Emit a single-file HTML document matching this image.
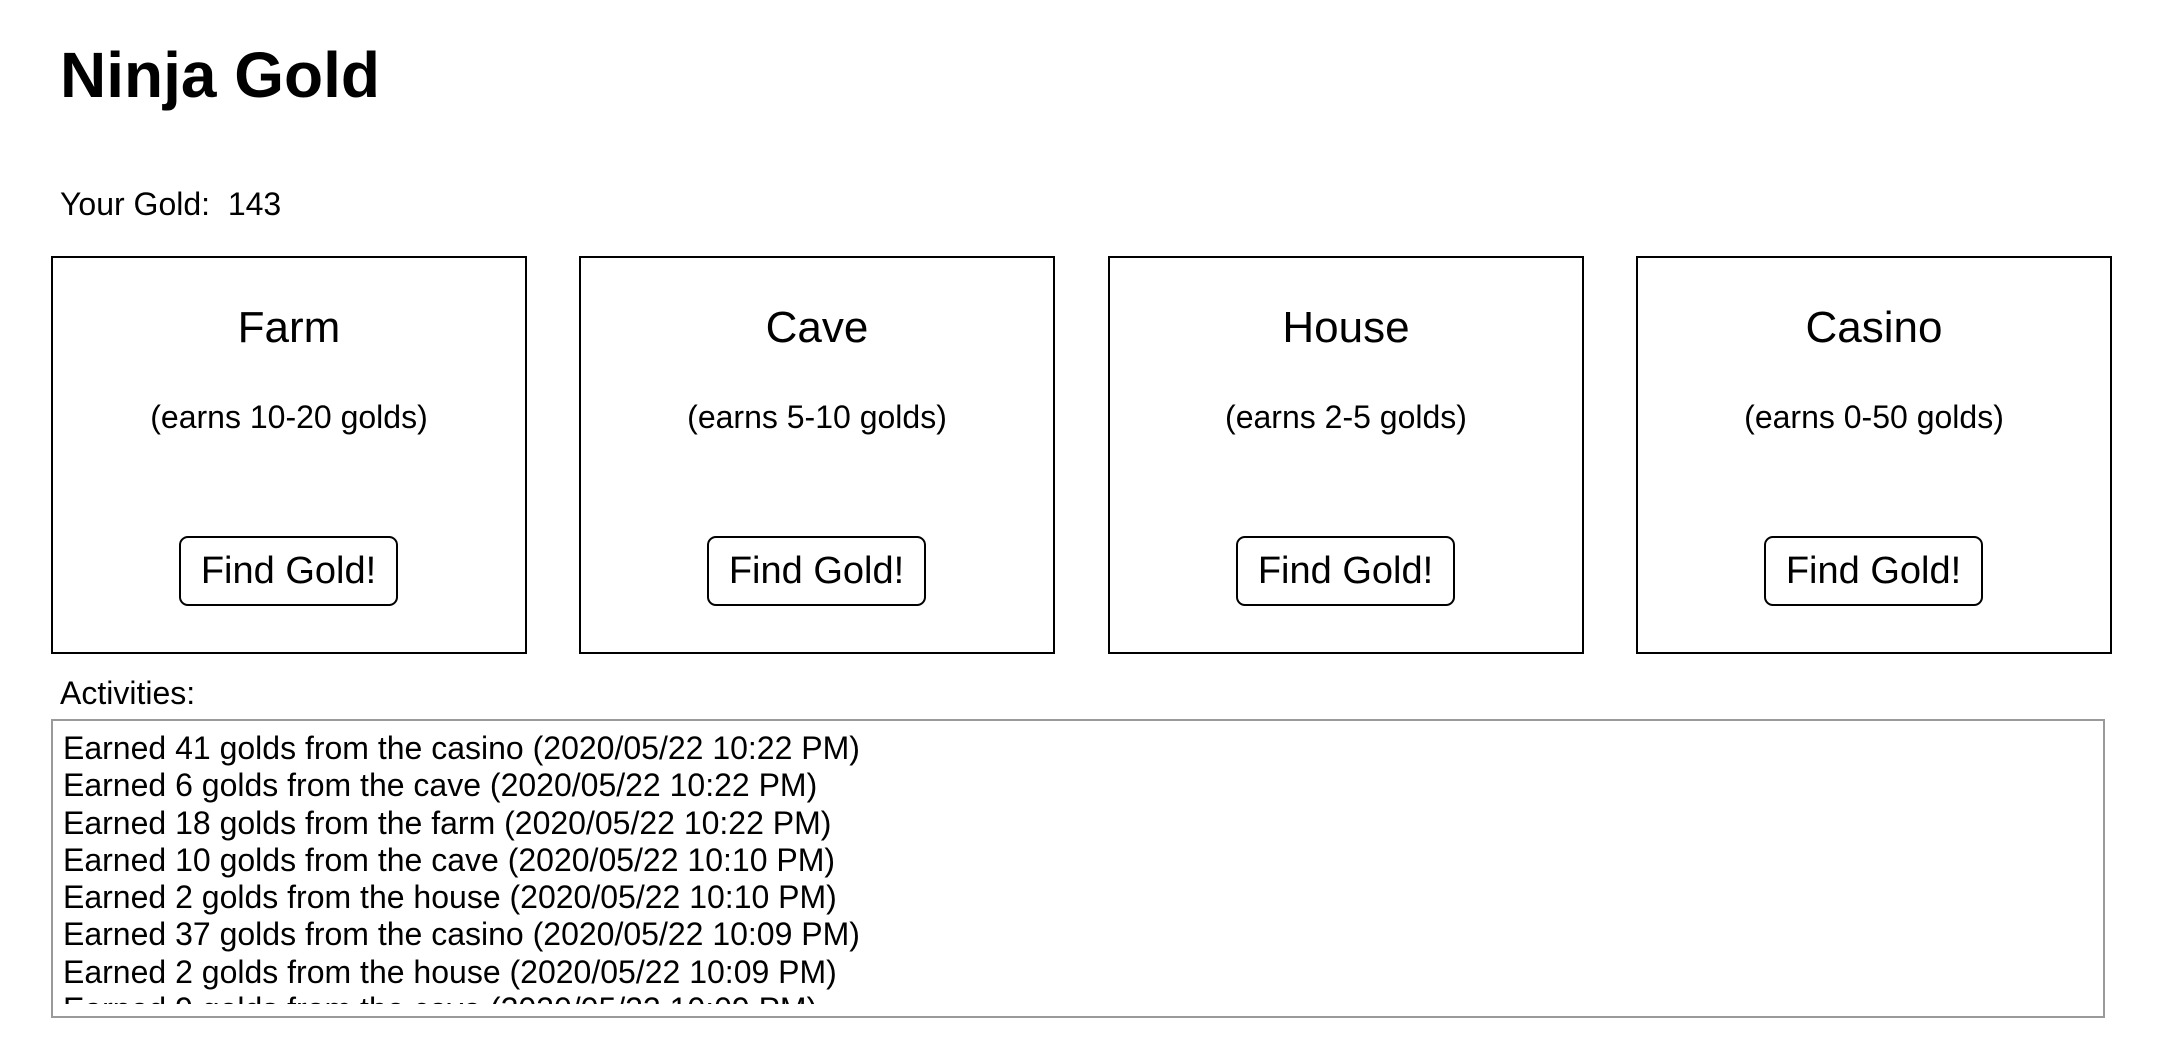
<!DOCTYPE html>
<html><head><meta charset="utf-8"><style>
*{margin:0;padding:0;box-sizing:border-box}
body{width:2174px;height:1052px;background:#fff;font-family:"Liberation Sans",Arial,sans-serif;color:#000;position:relative;overflow:hidden}
.a{position:absolute;line-height:1;white-space:nowrap}
.card{position:absolute;top:256px;width:476px;height:398px;border:2px solid #000}
.card .t{position:absolute;left:0;right:0;text-align:center;line-height:1}
.h{top:48px;font-size:44px}
.e{top:143px;font-size:32px}
.btn{position:absolute;top:278px;left:50%;margin-left:-110px;width:219px;height:70px;border:2px solid #000;border-radius:9px;font-size:38px;line-height:66px;text-align:center}
.ta{position:absolute;left:51px;top:719px;width:2054px;height:299px;border:2px solid #9a9a9a;font-size:32px;line-height:37.3px;overflow:hidden}
.in{position:absolute;left:10px;top:9px;height:274px;overflow:hidden}
.in div{white-space:nowrap}
</style></head><body>
<div class="a" style="left:60px;top:43px;font-size:64px;font-weight:bold">Ninja Gold</div>
<div class="a" style="left:60px;top:188px;font-size:32px">Your Gold:&nbsp; 143</div>

<div class="card" style="left:51px"><div class="t h">Farm</div><div class="t e">(earns 10-20 golds)</div><div class="btn">Find Gold!</div></div>
<div class="card" style="left:579px"><div class="t h">Cave</div><div class="t e">(earns 5-10 golds)</div><div class="btn">Find Gold!</div></div>
<div class="card" style="left:1108px"><div class="t h">House</div><div class="t e">(earns 2-5 golds)</div><div class="btn">Find Gold!</div></div>
<div class="card" style="left:1636px"><div class="t h">Casino</div><div class="t e">(earns 0-50 golds)</div><div class="btn">Find Gold!</div></div>

<div class="a" style="left:60px;top:677px;font-size:32px">Activities:</div>
<div class="ta"><div class="in">
<div>Earned 41 golds from the casino (2020/05/22 10:22 PM)</div>
<div>Earned 6 golds from the cave (2020/05/22 10:22 PM)</div>
<div>Earned 18 golds from the farm (2020/05/22 10:22 PM)</div>
<div>Earned 10 golds from the cave (2020/05/22 10:10 PM)</div>
<div>Earned 2 golds from the house (2020/05/22 10:10 PM)</div>
<div>Earned 37 golds from the casino (2020/05/22 10:09 PM)</div>
<div>Earned 2 golds from the house (2020/05/22 10:09 PM)</div>
<div>Earned 9 golds from the cave (2020/05/22 10:09 PM)</div>
</div></div>
</body></html>
